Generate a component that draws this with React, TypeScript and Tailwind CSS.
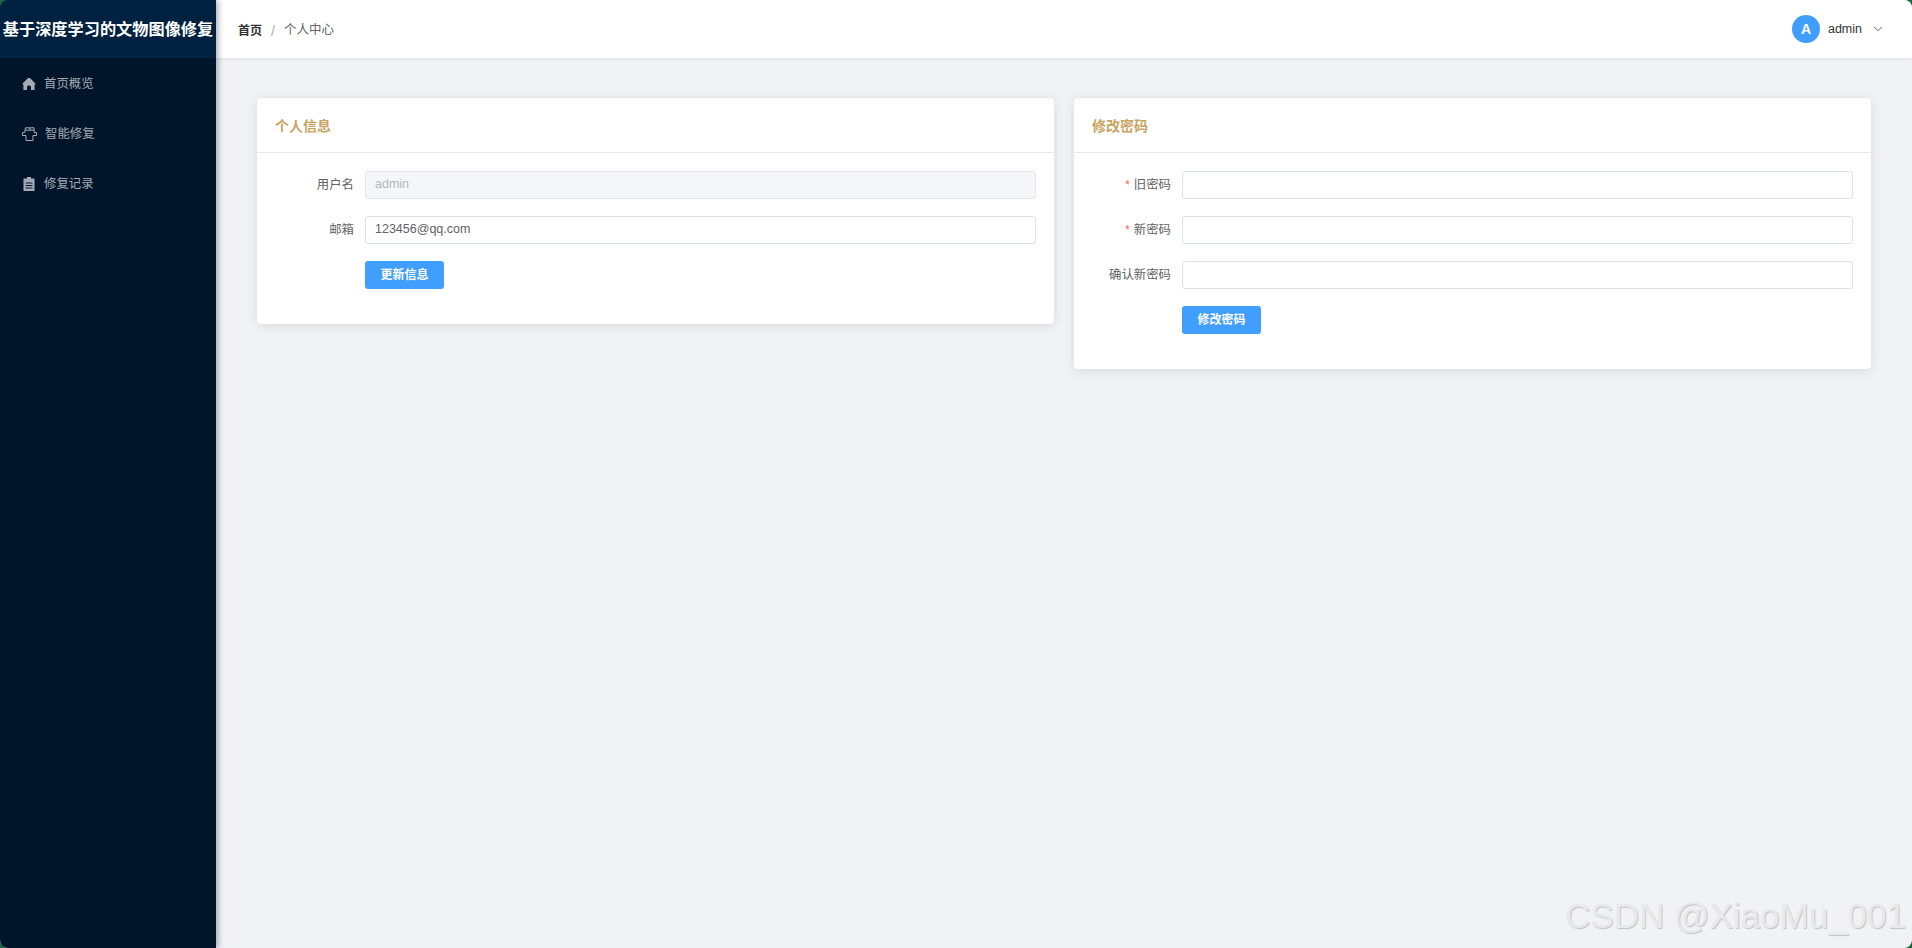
import React from "react";
import { ChevronDown } from "lucide-react";

const HomeIcon = () => (
    <svg width="14" height="14" viewBox="0 0 14 14" fill="#a4abb5">
        <path d="M7 1 C8 1 8.6 1.6 9.2 2.2 L13.4 6.6 V7.6 H12.6 V13 H9 V10.2 C9 9.2 8.2 8.6 7 8.6 C5.8 8.6 5 9.2 5 10.2 V13 H1.4 V7.6 H0.6 V6.6 L4.8 2.2 C5.4 1.6 6 1 7 1 Z" />
    </svg>
);

const OpenIcon = () => (
    <svg width="15" height="14" viewBox="0 0 15 14" fill="none" stroke="#a4abb5" strokeWidth="1">
        <path d="M2.8 5.5 L3.4 0.8 H12 L12.2 5.5 H14.5 V8.5 H11 V13.5 H4 V8.5 H0.5 V5.5 Z" />
        <path d="M3.1 3.2 H8 V1 M8 3.2 H12" />
    </svg>
);

const OrderIcon = () => (
    <svg width="14" height="14" viewBox="0 0 14 14" fill="#a4abb5">
        <path fillRule="evenodd" d="M5 0 H9 V1.6 H12.5 V14 H1.5 V1.6 H5 Z M3.6 5.4 V6.4 H10.4 V5.4 Z M3.6 8 V9 H10.4 V8 Z M3.6 10.6 V11.6 H10.4 V10.6 Z" />
    </svg>
);

const nav = [
    { label: "首页概览", icon: <HomeIcon /> },
    { label: "智能修复", icon: <OpenIcon /> },
    { label: "修复记录", icon: <OrderIcon /> },
];

const Field = ({
    label,
    required,
    value,
    disabled,
}: {
    label: string;
    required?: boolean;
    value?: string;
    disabled?: boolean;
}) => (
    <div className="flex items-center mb-[17px]">
        <label className="w-[88px] shrink-0 pr-[11px] pt-[1px] text-right text-[12.4px] text-[#606266]">
            {required && <span className="text-[#f56c6c] mr-1">*</span>}
            {label}
        </label>
        <input
            readOnly
            value={value ?? ""}
            disabled={disabled}
            className={`h-[28px] flex-1 min-w-0 rounded-[3px] border px-[9px] pb-[2px] text-[12.5px] outline-none ${
                disabled
                    ? "bg-[#f5f6fa] text-[#b4b6bb] border-[#e4e6ee]"
                    : "bg-white text-[#606266] border-[#dfe1e9]"
            }`}
        />
    </div>
);

const Card = ({ title, children }: { title: string; children: React.ReactNode }) => (
    <div className="flex-1 min-w-0 self-start rounded-[4px] bg-white shadow-[0_2px_12px_0_rgba(0,0,0,0.1)]">
        <div className="h-[55px] flex items-center px-[18px] pt-[2px] border-b border-[#e6e8ef] text-sm font-bold text-[#c8a45f]">
            {title}
        </div>
        <div className="pt-[18px] pb-[35px] pl-5 pr-[18px]">{children}</div>
    </div>
);

const SubmitButton = ({ text }: { text: string }) => (
    <div className="pl-[88px]">
        <button className="h-[28px] w-[79px] rounded-[3px] bg-[#409eff] text-xs font-bold text-white">
            {text}
        </button>
    </div>
);

export default function App() {
    return (
        <div className="h-[948px] bg-[#14683a] font-['Liberation_Sans','Noto_Sans_CJK_SC',sans-serif]">
            <div className="relative flex h-full overflow-hidden rounded-[8px] bg-[#f0f2f5]">
                <aside className="w-[216px] shrink-0 bg-[#001529] z-20 shadow-[2px_0_6px_rgba(0,21,41,0.35)]">
                    <div className="h-[58px] flex items-center justify-center whitespace-nowrap bg-[#002140] text-[16.2px] font-bold text-white">
                        基于深度学习的文物图像修复
                    </div>
                    <nav className="pt-[1px]">
                        {nav.map((item) => (
                            <div
                                key={item.label}
                                className="h-[50px] flex items-center gap-2 pl-[22px] text-[12.4px] text-[#a4abb5]"
                            >
                                {item.icon}
                                <span>{item.label}</span>
                            </div>
                        ))}
                    </nav>
                </aside>
                <main className="flex-1 min-w-0">
                    <header className="h-[58px] flex items-center justify-between pl-[22px] pr-[27px] bg-white shadow-[0_1px_4px_rgba(0,21,41,0.08)]">
                        <div className="flex items-center pt-[3px] text-xs">
                            <span className="font-bold text-[#303133]">首页</span>
                            <span className="mx-[9px] text-sm text-[#a4a8b0]">/</span>
                            <span className="text-[12.5px] text-[#606266]">个人中心</span>
                        </div>
                        <div className="flex items-center text-[12.5px] text-[#333]">
                            <span className="w-[28px] h-[28px] rounded-full bg-[#409eff] flex items-center justify-center text-sm font-bold text-white">
                                A
                            </span>
                            <span className="ml-2">admin</span>
                            <ChevronDown size={14} strokeWidth={1.4} className="ml-[9px] text-[#404246]" />
                        </div>
                    </header>
                    <div className="flex gap-5 pt-10 pl-[41px] pr-[41px]">
                        <Card title="个人信息">
                            <Field label="用户名" value="admin" disabled />
                            <Field label="邮箱" value="123456@qq.com" />
                            <SubmitButton text="更新信息" />
                        </Card>
                        <Card title="修改密码">
                            <Field label="旧密码" required />
                            <Field label="新密码" required />
                            <Field label="确认新密码" />
                            <SubmitButton text="修改密码" />
                        </Card>
                    </div>
                </main>
                <div className="absolute right-[6px] bottom-[15px] z-30 text-[35px] leading-none text-[#e8e9ec] [text-shadow:1px_1px_1px_rgba(0,0,0,0.2)]">
                    CSDN @XiaoMu_001
                </div>
            </div>
        </div>
    );
}
